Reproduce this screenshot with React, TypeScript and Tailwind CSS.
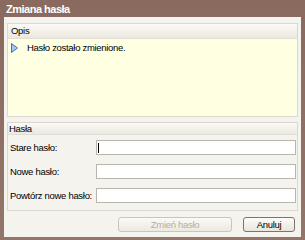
export default function App() {
  return (
    <div
      className="w-[305px] h-[240px] flex flex-col bg-gradient-to-b from-[#8a6a5e] to-[#93756a] px-[4px] pb-[3px] text-[9.5px] tracking-[-0.3px] text-black"
      style={{ fontFamily: '"Liberation Sans", Arial, sans-serif' }}
    >
      {/* Title bar */}
      <div className="h-[17px] flex items-center pl-[2px] pt-[1px] text-white font-bold text-[11px] tracking-[-0.5px] leading-none">
        Zmiana hasła
      </div>

      <div className="flex-1 flex flex-col bg-[#f5f3ee] px-[3px] pt-[6px]">
        {/* Opis */}
        <div className="h-[94px] flex flex-col border border-[#dcd8cf]">
          <div className="h-[15px] flex items-center px-[3px] bg-gradient-to-b from-[#fbfaf7] to-[#ebe8df] border-b border-[#e2ded5] leading-none">
            Opis
          </div>
          <div className="flex-1 bg-[#ffffe1] pl-[2px] pt-[4px]">
            <div className="flex items-center gap-[9px] h-[10px]">
              <svg width="7" height="10" viewBox="0 0 7 10" className="ml-[1px]">
                <path d="M0.5 0.5 L6.5 5 L0.5 9.5 Z" fill="#a9c8ee" stroke="#3a6ec8" strokeWidth="1" />
              </svg>
              <span className="leading-none">Hasło zostało zmienione.</span>
            </div>
          </div>
        </div>

        {/* Hasła */}
        <div className="mt-[5px] h-[89px] flex flex-col border border-[#dcd8cf]">
          <div className="h-[12px] flex items-center px-[1px] bg-gradient-to-b from-[#fbfaf7] to-[#ebe8df] border-b border-[#e2ded5] leading-none">
            Hasła
          </div>
          <div className="flex flex-col gap-[9px] pt-[5px] pl-[2px] pr-[1px]">
            {['Stare hasło:', 'Nowe hasło:', 'Powtórz nowe hasło:'].map((label, i) => (
              <div key={label} className="flex items-center h-[15px]">
                <span className="w-[86px] leading-none whitespace-nowrap">{label}</span>
                <div className="flex-1 h-[15px] bg-white border border-[#b9b6ae] flex items-center pl-[1px]">
                  {i === 0 && <div className="w-px h-[10px] bg-black" />}
                </div>
              </div>
            ))}
          </div>
        </div>

        {/* Buttons */}
        <div className="flex justify-end gap-[11px] pt-[6px] pr-[3px]">
          <div className="w-[114px] h-[15px] rounded-[3px] border border-[#c9c6bb] bg-gradient-to-b from-[#fbfaf6] to-[#ece9df] flex items-center justify-center text-[#b3afa4] leading-none">
            Zmień hasło
          </div>
          <div className="w-[52px] h-[15px] rounded-[3px] border border-[#7d7668] bg-gradient-to-b from-[#fdfcf9] to-[#e9e5d9] flex items-center justify-center leading-none">
            Anuluj
          </div>
        </div>
      </div>
    </div>
  );
}
